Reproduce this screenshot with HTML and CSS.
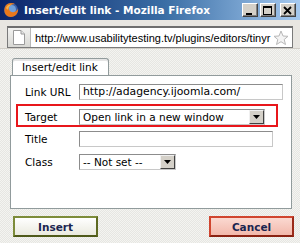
FILE: index.html
```html
<!DOCTYPE html>
<html>
<head>
<meta charset="utf-8">
<link rel="stylesheet" href="styles.css">
</head>
<body>
<div class="window">
  <div class="titlebar">
    <svg class="fxicon" width="16" height="16" viewBox="0 0 16 16">
      <circle cx="8" cy="8" r="7" fill="#3a5fa8"/>
      <circle cx="8.5" cy="7.5" r="4.5" fill="#6fa0dc"/>
      <path d="M2 5 C3 1 9 0 12 2 C9 2 7 3 6 5 C5 8 8 11 11 10 C13 9.5 15 8 15 6 C16 11 12 15 8 15 C3 15 0 10 2 5 Z" fill="#e8781c"/>
      <path d="M3 6 C4 3 7 2 9 2.5 C7 3.5 5 5 5 8 C4 7 3.5 6.5 3 6 Z" fill="#f6b24a"/>
    </svg>
    <span class="title">Insert/edit link - Mozilla Firefox</span>
    <div class="wbtns">
      <span class="wbtn"><svg width="14" height="14" viewBox="0 0 14 14"><rect x="3" y="9" width="6" height="2" fill="#000"/></svg></span>
      <span class="wbtn"><svg width="14" height="14" viewBox="0 0 14 14"><rect x="2.5" y="2.5" width="8" height="8" fill="none" stroke="#000"/><rect x="2" y="2" width="9" height="2" fill="#000"/></svg></span>
      <span class="wbtn wclose"><svg width="14" height="14" viewBox="0 0 14 14"><path d="M3 3 L10 10 M10 3 L3 10" stroke="#000" stroke-width="1.8"/></svg></span>
    </div>
  </div>
  <div class="navbar">
    <div class="urlbar">
      <span class="identity"><svg width="12" height="15" viewBox="0 0 12 15"><path d="M0.5 0.5 H8 L11.5 4 V14.5 H0.5 Z" fill="#fff" stroke="#9a9a9a"/><path d="M8 0.5 V4 H11.5" fill="#e6e6e6" stroke="#9a9a9a"/></svg></span>
      <span class="url">http://www.usabilitytesting.tv/plugins/editors/tinyr</span>
      <svg class="star" width="16" height="16" viewBox="0 0 16 16"><path d="M8 1 L10 6 L15 6.3 L11.2 9.5 L12.5 14.5 L8 11.7 L3.5 14.5 L4.8 9.5 L1 6.3 L6 6 Z" fill="#f4f4f4" stroke="#b8b8b8" stroke-linejoin="round"/></svg>
    </div>
  </div>
  <div class="content">
    <div class="tabs"><span class="tab">Insert/edit link</span></div>
    <div class="panel">
      <div class="row row-url">
        <label class="lbl">Link URL</label>
        <span class="field field-url">http://adagency.ijoomla.com/</span>
      </div>
      <div class="row row-target">
        <label class="lbl">Target</label>
        <span class="select select-target"><span class="seltext">Open link in a new window</span><span class="dd"><svg width="7" height="4" viewBox="0 0 7 4"><path d="M0 0 H7 L3.5 4 Z" fill="#000"/></svg></span></span>
      </div>
      <div class="row row-title">
        <label class="lbl">Title</label>
        <span class="field field-title"></span>
      </div>
      <div class="row row-class">
        <label class="lbl">Class</label>
        <span class="select select-class"><span class="seltext">-- Not set --</span><span class="dd"><svg width="7" height="4" viewBox="0 0 7 4"><path d="M0 0 H7 L3.5 4 Z" fill="#000"/></svg></span></span>
      </div>
      <div class="highlight"></div>
    </div>
    <div class="buttons">
      <span class="btn btn-insert">Insert</span>
      <span class="btn btn-cancel">Cancel</span>
    </div>
  </div>
</div>
</body>
</html>
```
FILE: styles.css
```css
html, body { margin: 0; padding: 0; }
body { width: 300px; height: 243px; overflow: hidden; font-family: "DejaVu Sans", Verdana, sans-serif; }
.window { width: 300px; height: 243px; display: flex; flex-direction: column; background: #d4d0c8; }
.titlebar { height: 20px; display: flex; align-items: center; background: linear-gradient(to right, #0a246a, #3a6ea5 55%, #a6caf0); color: #fff; padding-left: 3px; }
.fxicon { flex: none; }
.title { margin-left: 5px; font-family: "DejaVu Sans", Tahoma, sans-serif; font-weight: bold; font-size: 10.5px; letter-spacing: 0; white-space: nowrap; }
.wbtns { margin-left: auto; display: flex; gap: 2px; padding-right: 4px; }
.wbtn { width: 14px; height: 12px; background: #d4d0c8; border: 1px solid; border-color: #fff #404040 #404040 #fff; box-shadow: inset -1px -1px #808080; display: flex; align-items: center; justify-content: center; overflow: hidden; }
.wbtn svg { display: block; margin-top: 1px; }
.wclose { margin-left: 2px; }
.navbar { height: 29px; background: #e8e6e1; padding: 6px 7px 0 7px; box-sizing: border-box; border-bottom: 1px solid #d0cdc6; }
.urlbar { height: 22px; box-sizing: border-box; background: #fff; border: 1px solid #7a7a7a; border-top: 2px solid #6e6e6e; display: flex; align-items: center; }
.identity { width: 22px; height: 19px; background: linear-gradient(#f2f2f0, #d8d8d4); border-right: 1px solid #b8b8b8; display: flex; align-items: center; justify-content: center; }
.url { margin-left: 4px; font-family: "Liberation Sans", Tahoma, sans-serif; font-size: 11px; color: #000; white-space: nowrap; overflow: hidden; flex: 1; }
.star { margin: 0 3px 0 1px; flex: none; }
.content { flex: 1; background-color: #efefeb; background-image: repeating-conic-gradient(#f4f4f1 0 25%, #e6e6e2 0 50%); background-size: 2px 2px; padding: 9px 8px 0 10px; }
.tabs { display: flex; padding-left: 2px; }
.tab { height: 16px; padding: 0 10px 0 9px; border: 1px solid #919b9c; border-bottom: none; border-radius: 3px 3px 0 0; background: #fff; font-size: 10.5px; line-height: 16px; color: #000; box-shadow: inset 0 2px #e5e5e5; }
.panel { position: relative; height: 134px; box-sizing: border-box; background: #fff; border: 1px solid #919b9c; padding: 8px 8px 0 14px; display: flex; flex-direction: column; }
.row { display: flex; align-items: center; height: 16px; }
.row-target { margin-top: 9px; }
.row-title { margin-top: 6px; }
.row-class { margin-top: 7px; }
.lbl { width: 54px; flex: none; font-size: 10.5px; color: #000; }
.field { height: 16px; box-sizing: border-box; border: 1px solid #a0a0a0; border-color: #8c8c8c #c8c8c8 #c8c8c8 #8c8c8c; background: #fff; font-size: 10.8px; line-height: 14px; padding-left: 3px; white-space: nowrap; }
.field-url { width: 205px; }
.field-title { width: 194px; }
.select { height: 16px; box-sizing: border-box; border: 1px solid; border-color: #8c8c8c #c8c8c8 #c8c8c8 #8c8c8c; background: #fff; display: flex; align-items: center; font-size: 10.5px; }
.seltext { flex: 1; padding-left: 3px; white-space: nowrap; overflow: hidden; }
.select-target { width: 186px; }
.select-class { width: 97px; }
.dd { width: 15px; height: 14px; box-sizing: border-box; background: #d4d0c8; border: 1px solid; border-color: #f0f0f0 #404040 #404040 #f0f0f0; display: flex; align-items: center; justify-content: center; }
.highlight { position: absolute; left: 5px; top: 28px; width: 262px; height: 23px; box-sizing: border-box; border: 2px solid #e8161b; }
.buttons { display: flex; justify-content: space-between; margin: 7px -2px 0 3px; }
.btn { width: 85px; height: 21px; box-sizing: border-box; border: 2px solid; display: flex; align-items: center; justify-content: center; font-weight: bold; font-size: 10.5px; color: #1a2550; }
.btn-insert { background: linear-gradient(#ffffff, #eaeadf); border-color: #7d8c3a #5e6a22 #4f5a1a #7d8c3a; }
.btn-cancel { background: linear-gradient(#fbd9d1, #f2b8ab); border-color: #d0452f #9a2a1a #8a2212 #d0452f; }
```
